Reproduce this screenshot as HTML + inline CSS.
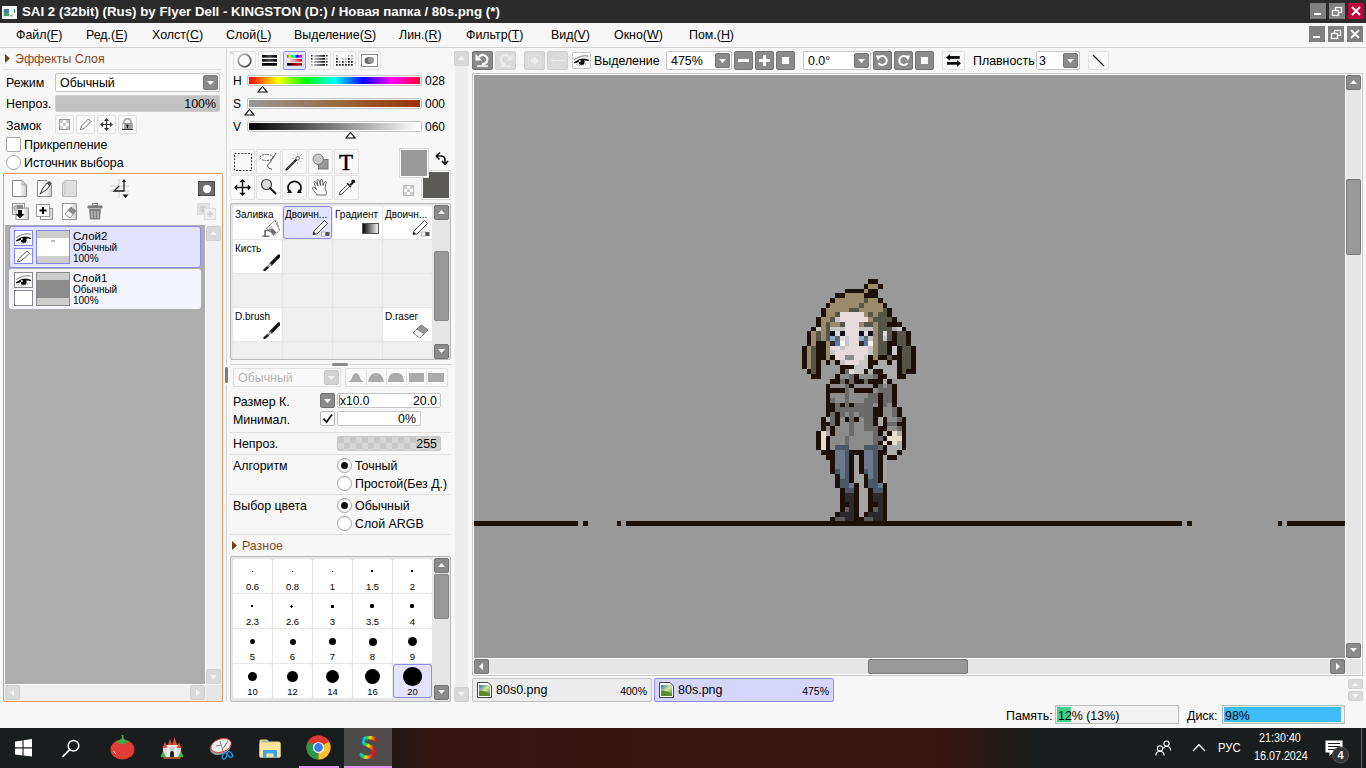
<!DOCTYPE html>
<html><head><meta charset="utf-8">
<style>
*{box-sizing:border-box;margin:0;padding:0}
html,body{width:1366px;height:768px;overflow:hidden;background:#f7f7f7;font-family:"Liberation Sans",sans-serif;font-size:12.4px;color:#000}
.a{position:absolute}
.t{position:absolute;white-space:nowrap;line-height:14px}
.bd{position:absolute;background:#8b8b8b;border:1px solid #737373;border-radius:2px}
.bl{position:absolute;background:#dadada;border:1px solid #d0d0d0;border-radius:2px}
.bw{position:absolute;background:#f9f9f9;border:1px solid #e2e2e2;border-radius:2px}
.inp{position:absolute;background:#fff;border:1px solid #c6c6c6;border-radius:2px}
u{text-decoration:none;border-bottom:1px solid #000}
</style></head><body>
<!-- TITLE BAR -->
<div class="a" style="left:0;top:0;width:1366px;height:23px;background:#2b2b2b"></div>
<div class="t" style="left:22px;top:4px;font-size:13.3px;font-weight:bold;color:#fff;line-height:15px">SAI 2 (32bit) (Rus) by Flyer Dell - KINGSTON (D:) / Новая папка / 80s.png (*)</div>
<!-- MENU BAR -->
<svg class="a" style="left:2px;top:6px" width="15" height="13"><rect x="0" y="0" width="15" height="13" fill="#f4f4f4"/><defs><linearGradient id="ig" x1="0" y1="0" x2="0" y2="1"><stop offset="0" stop-color="#3a70b0"/><stop offset="1" stop-color="#40b050"/></linearGradient></defs><rect x="1.8" y="3" width="5.2" height="7.2" fill="url(#ig)"/><rect x="11.9" y="2.9" width="1.1" height="4" fill="#3a8a70"/><rect x="8" y="9" width="2.8" height="1.5" fill="#bbb"/></svg>
<div class="a" style="left:1310px;top:3px;width:16px;height:16px;background:#808080"></div>
<div class="a" style="left:1314px;top:13px;width:7px;height:2px;background:#fff"></div>
<div class="a" style="left:1329px;top:3px;width:16px;height:16px;background:#808080"></div>
<svg class="a" style="left:1329px;top:3px" width="16" height="16"><rect x="6.5" y="4.5" width="6" height="5" fill="none" stroke="#fff" stroke-width="1.3"/><rect x="3.5" y="7.5" width="6" height="5" fill="#808080" stroke="#fff" stroke-width="1.3"/></svg>
<div class="a" style="left:1348px;top:3px;width:16px;height:16px;background:#c4003a"></div>
<svg class="a" style="left:1348px;top:3px" width="16" height="16"><path d="M4 4 L12 12 M12 4 L4 12" stroke="#fff" stroke-width="2"/></svg>
<div class="t" style="left:16px;top:28px">Файл(<span style="text-decoration:underline;text-underline-offset:2px">F</span>)</div>
<div class="t" style="left:86px;top:28px">Ред.(<span style="text-decoration:underline;text-underline-offset:2px">E</span>)</div>
<div class="t" style="left:152px;top:28px">Холст(<span style="text-decoration:underline;text-underline-offset:2px">C</span>)</div>
<div class="t" style="left:226px;top:28px">Слой(<span style="text-decoration:underline;text-underline-offset:2px">L</span>)</div>
<div class="t" style="left:294px;top:28px">Выделение(<span style="text-decoration:underline;text-underline-offset:2px">S</span>)</div>
<div class="t" style="left:399px;top:28px">Лин.(<span style="text-decoration:underline;text-underline-offset:2px">R</span>)</div>
<div class="t" style="left:466px;top:28px">Фильтр(<span style="text-decoration:underline;text-underline-offset:2px">T</span>)</div>
<div class="t" style="left:551px;top:28px">Вид(<span style="text-decoration:underline;text-underline-offset:2px">V</span>)</div>
<div class="t" style="left:614px;top:28px">Окно(<span style="text-decoration:underline;text-underline-offset:2px">W</span>)</div>
<div class="t" style="left:689px;top:28px">Пом.(<span style="text-decoration:underline;text-underline-offset:2px">H</span>)</div>
<div class="a" style="left:1309px;top:26px;width:16px;height:16px;background:#7f7f7f"></div>
<div class="a" style="left:1313px;top:36px;width:7px;height:2px;background:#fff"></div>
<div class="a" style="left:1328px;top:26px;width:16px;height:16px;background:#7f7f7f"></div>
<svg class="a" style="left:1328px;top:26px" width="16" height="16"><rect x="6.5" y="4.5" width="6" height="5" fill="none" stroke="#fff" stroke-width="1.3"/><rect x="3.5" y="7.5" width="6" height="5" fill="#7f7f7f" stroke="#fff" stroke-width="1.3"/></svg>
<div class="a" style="left:1347px;top:26px;width:16px;height:16px;background:#7f7f7f"></div>
<svg class="a" style="left:1347px;top:26px" width="16" height="16"><path d="M4 4 L12 12 M12 4 L4 12" stroke="#fff" stroke-width="2"/></svg>

<div class="a" style="left:0;top:47px;width:1366px;height:1px;background:#cfcfcf"></div>
<!-- vertical divider -->
<div class="a" style="left:226px;top:48px;width:1px;height:653px;background:#d4d4d4"></div>

<!-- LEFT PANEL -->
<svg class="a" style="left:5px;top:54px" width="6" height="10"><path d="M0 0 L5 4.5 L0 9 Z" fill="#7a3d10"/></svg>
<div class="t" style="left:15px;top:52px;color:#8b4a1c">Эффекты Слоя</div>
<div class="a" style="left:3px;top:69px;width:219px;height:1px;background:#e3e3e3"></div>
<div class="t" style="left:6px;top:76px">Режим</div>
<div class="inp" style="left:55px;top:73px;width:165px;height:19px"></div>
<div class="t" style="left:60px;top:76px">Обычный</div>
<div class="bd" style="left:203px;top:75px;width:15px;height:15px"></div>
<svg class="a" style="left:206px;top:81px" width="9" height="5"><path d="M1 0 L8 0 L4.5 4 Z" fill="#fff"/></svg>
<div class="t" style="left:6px;top:97px">Непроз.</div>
<div class="a" style="left:55px;top:95px;width:165px;height:17px;border:1px solid #cdcdcd;border-radius:2px;background:#c2c2c2"></div>
<div class="t" style="left:180px;top:97px;width:36px;text-align:right">100%</div>
<div class="t" style="left:6px;top:119px">Замок</div>
<div class="bw" style="left:55px;top:115px;width:19px;height:19px"></div>
<div class="bw" style="left:76px;top:115px;width:19px;height:19px"></div>
<div class="bw" style="left:97px;top:115px;width:19px;height:19px"></div>
<div class="bw" style="left:118px;top:115px;width:19px;height:19px"></div>
<svg class="a" style="left:59px;top:119px" width="11" height="11"><rect x="0.5" y="0.5" width="10" height="10" fill="#fff" stroke="#999"/><rect x="1" y="1" width="3" height="3" fill="#ccc"/><rect x="7" y="1" width="3" height="3" fill="#ccc"/><rect x="4" y="4" width="3" height="3" fill="#ccc"/><rect x="1" y="7" width="3" height="3" fill="#ccc"/><rect x="7" y="7" width="3" height="3" fill="#ccc"/></svg>
<svg class="a" style="left:79px;top:118px" width="13" height="13"><path d="M1.5 11.5 L2.5 8 L9.5 1 L12 3.5 L5 10.5 Z" fill="#fff" stroke="#777" stroke-width="1"/></svg>
<svg class="a" style="left:100px;top:118px" width="13" height="13"><path d="M6.5 2 V11 M2 6.5 H11" stroke="#383838" stroke-width="1.1"/><path d="M6.5 0 L4 3 H9 Z M6.5 13 L4 10 H9 Z M0 6.5 L3 4 V9 Z M13 6.5 L10 4 V9 Z" fill="#383838"/></svg>
<svg class="a" style="left:122px;top:118px" width="11" height="13"><path d="M2 5.5 V4 A3.5 3.5 0 0 1 9 4 V5.5" fill="none" stroke="#aaa" stroke-width="1.8"/><rect x="0.2" y="5" width="10.6" height="7" fill="#9c9c9c"/><rect x="0.2" y="11" width="10.6" height="1" fill="#333"/><rect x="0.6" y="5.8" width="1.4" height="5" fill="#fff"/><circle cx="5.5" cy="7.6" r="1" fill="#000"/><rect x="5" y="7.6" width="1" height="2.6" fill="#000"/></svg>
<div class="a" style="left:6px;top:137px;width:15px;height:15px;border:1px solid #a8a8a8;border-radius:2px;background:#fff"></div>
<div class="t" style="left:24px;top:138px">Прикрепление</div>
<div class="a" style="left:6px;top:155px;width:15px;height:15px;border:1px solid #a8a8a8;border-radius:50%;background:#fff"></div>
<div class="t" style="left:24px;top:156px">Источник выбора</div>
<div class="a" style="left:3px;top:173px;width:220px;height:529px;border:1px solid #e59a68;border-radius:2px"></div>

<svg class="a" style="left:12px;top:180px" width="16" height="18"><defs><linearGradient id="pg" x1="0" x2="1"><stop offset="0.5" stop-color="#fff"/><stop offset="1" stop-color="#c8c8c8"/></linearGradient></defs><path d="M0.5 0.5 H10 L14.5 5 V16.5 H0.5 Z" fill="url(#pg)" stroke="#8a8a8a"/><path d="M10 0.5 V5 H14.5" fill="none" stroke="#aaa"/></svg>
<svg class="a" style="left:37px;top:180px" width="16" height="18"><path d="M0.5 0.5 H10 L14.5 5 V16.5 H0.5 Z" fill="url(#pg)" stroke="#8a8a8a"/><path d="M3 14 L6 8 L10 3 L13 5.5 L9 10 Z" fill="#fff" stroke="#333" stroke-width="1"/><path d="M10 3 L12.5 1 L15 3.5 L13 5.5 Z" fill="#555"/></svg>
<svg class="a" style="left:62px;top:180px" width="16" height="18"><path d="M0.5 3 L3 0.5 H14.5 V16.5 H0.5 Z" fill="#dedede" stroke="#b8b8b8"/><path d="M3 0.5 V13 L0.5 16" fill="none" stroke="#c4c4c4"/></svg>
<svg class="a" style="left:110px;top:179px" width="20" height="20"><path d="M0 7 H19 M0 12 H19 M9 0 V19" stroke="#ccc" stroke-width="1"/><path d="M14 1 V12 H4 L9 7" fill="none" stroke="#222" stroke-width="1.3"/><path d="M14 0 L12 3 H16 Z" fill="#222"/><path d="M12.5 15.5 H18.5 L15.5 19 Z" fill="#111"/></svg>
<div class="a" style="left:198px;top:181px;width:17px;height:15px;background:#6c6c6c;border:1px solid #4a4a4a"></div>
<div class="a" style="left:202.5px;top:184.5px;width:8px;height:8px;border-radius:50%;background:#fff"></div>
<svg class="a" style="left:12px;top:203px" width="17" height="17"><rect x="0.5" y="0.5" width="12" height="11" fill="#eee" stroke="#999"/><rect x="4" y="5" width="12.5" height="11.5" fill="url(#pg)" stroke="#999"/><circle cx="4" cy="5" r="3" fill="#bbb"/><rect x="5" y="2" width="6" height="4" fill="#888"/><path d="M6 7 H10 V11 H12.5 L8 15.5 L3.5 11 H6 Z" fill="#111"/></svg>
<svg class="a" style="left:36px;top:204px" width="18" height="16"><rect x="4.5" y="4.5" width="12" height="11" fill="url(#pg)" stroke="#999"/><rect x="0.5" y="0.5" width="13" height="12" fill="#fff" stroke="#333" stroke-dasharray="1 1"/><path d="M6 3 H8 V5.5 H10.5 V7.5 H8 V10 H6 V7.5 H3.5 V5.5 H6 Z" fill="#000"/></svg>
<svg class="a" style="left:62px;top:203px" width="16" height="17"><path d="M0.5 0.5 H14.5 V16.5 H0.5 Z" fill="url(#pg)" stroke="#999"/><path d="M3 11 L9 4 L14 8 L8 15 Z" fill="#fff" stroke="#888"/><path d="M6 7.5 L9 4 L14 8 L11 11.5 Z" fill="#888"/></svg>
<svg class="a" style="left:87px;top:203px" width="16" height="17"><rect x="5.5" y="0.5" width="5" height="2" fill="none" stroke="#888"/><rect x="0.5" y="2.5" width="15" height="3" rx="1" fill="#7a7a7a"/><path d="M2 6 H14 L13 16.5 H3 Z" fill="#808080"/><path d="M5 8 V15 M8 8 V15 M11 8 V15" stroke="#c8c8c8" stroke-width="1.2"/></svg>
<svg class="a" style="left:197px;top:203px" width="20" height="17"><rect x="0.5" y="0.5" width="12" height="11" fill="#e4e4e4" stroke="#ddd"/><circle cx="6" cy="6" r="3.5" fill="#d0d0d0"/><rect x="7.5" y="5.5" width="11" height="11" fill="#eee" stroke="#ddd"/><path d="M13 8 V14 M10 11 H16" stroke="#ccc" stroke-width="1.6"/></svg>


<div class="a" style="left:5px;top:225px;width:217px;height:476px;background:#fff"></div>
<div class="a" style="left:5px;top:225px;width:200px;height:459px;background:#adadad"></div>
<div class="a" style="left:206px;top:225px;width:16px;height:459px;background:#f0f0f0"></div>
<div class="a" style="left:5px;top:685px;width:201px;height:16px;background:#f0f0f0"></div>
<div class="a" style="left:206px;top:685px;width:16px;height:16px;background:#e6e6e6"></div>
<div class="bl" style="left:206px;top:226px;width:15px;height:15px"></div>
<svg class="a" style="left:209px;top:231px" width="9" height="5"><path d="M1 4 L8 4 L4.5 0 Z" fill="#f4f4f4"/></svg>
<div class="bl" style="left:206px;top:669px;width:15px;height:15px"></div>
<svg class="a" style="left:209px;top:675px" width="9" height="5"><path d="M1 0 L8 0 L4.5 4 Z" fill="#f4f4f4"/></svg>
<div class="bl" style="left:5px;top:685px;width:15px;height:15px"></div>
<svg class="a" style="left:10px;top:688px" width="5" height="9"><path d="M4 1 L4 8 L0 4.5 Z" fill="#f4f4f4"/></svg>
<div class="bl" style="left:190px;top:685px;width:15px;height:15px"></div>
<svg class="a" style="left:196px;top:688px" width="5" height="9"><path d="M0 1 L0 8 L4 4.5 Z" fill="#f4f4f4"/></svg>
<div class="a" style="left:9px;top:226px;width:192px;height:42px;background:#e3e3fd;border:1px solid #8c8cf4;border-radius:3px"></div>
<div class="a" style="left:14px;top:230px;width:19px;height:16px;background:#fff;border:1px solid #8686f2"></div>
<div class="a" style="left:14px;top:248px;width:19px;height:16px;background:#fff;border:1px solid #8686f2"></div>
<svg class="a" style="left:15px;top:232px" width="17" height="13"><path d="M1.2 5.6 Q8.7 0.5 15.5 2.2" fill="none" stroke="#666" stroke-width="0.9"/><path d="M1.2 8.8 Q9 2.6 15.8 6.4 Q9 4.6 4 8.2 Z" fill="#000" stroke="#000" stroke-width="0.9"/><circle cx="8.7" cy="7.9" r="2.9" fill="#000"/><circle cx="6.9" cy="6.9" r="1" fill="#fff"/><path d="M3.5 10.6 Q9 12.4 14.5 9" fill="none" stroke="#555" stroke-width="0.9" stroke-dasharray="1 1.2"/></svg>
<svg class="a" style="left:16px;top:250px" width="15" height="13"><path d="M1.5 12 L2.5 9 L11 1 L13.5 3.5 L5 11 Z" fill="#fff" stroke="#555" stroke-width="0.9"/></svg>
<div class="a" style="left:36px;top:230px;width:34px;height:34px;background:#fff;border:1px solid #8686f2"></div>
<div class="a" style="left:37px;top:231px;width:32px;height:7px;background:#cdcdcd"></div>
<div class="a" style="left:37px;top:256px;width:32px;height:7px;background:#cdcdcd"></div>
<div class="a" style="left:51px;top:240px;width:4px;height:2px;background:#bbb"></div>
<div class="t" style="left:73px;top:229px;font-size:11.5px">Слой2</div>
<div class="t" style="left:73px;top:242px;font-size:10px;line-height:12px">Обычный</div>
<div class="t" style="left:73px;top:253px;font-size:10px;line-height:12px">100%</div>
<div class="a" style="left:9px;top:269px;width:192px;height:40px;background:#f4f4fd;border-radius:3px"></div>
<div class="a" style="left:14px;top:272px;width:19px;height:16px;background:#fff;border:1px solid #8a8a8a"></div>
<div class="a" style="left:14px;top:290px;width:19px;height:16px;background:#fff;border:1px solid #8a8a8a"></div>
<svg class="a" style="left:15px;top:274px" width="17" height="13"><path d="M1.2 5.6 Q8.7 0.5 15.5 2.2" fill="none" stroke="#666" stroke-width="0.9"/><path d="M1.2 8.8 Q9 2.6 15.8 6.4 Q9 4.6 4 8.2 Z" fill="#000" stroke="#000" stroke-width="0.9"/><circle cx="8.7" cy="7.9" r="2.9" fill="#000"/><circle cx="6.9" cy="6.9" r="1" fill="#fff"/><path d="M3.5 10.6 Q9 12.4 14.5 9" fill="none" stroke="#555" stroke-width="0.9" stroke-dasharray="1 1.2"/></svg>
<div class="a" style="left:36px;top:272px;width:34px;height:34px;background:#cdcdcd;border:1px solid #8a8a8a"></div>
<div class="a" style="left:37px;top:280px;width:32px;height:18px;background:#8c8c8c"></div>
<div class="t" style="left:73px;top:271px;font-size:11.5px">Слой1</div>
<div class="t" style="left:73px;top:284px;font-size:10px;line-height:12px">Обычный</div>
<div class="t" style="left:73px;top:295px;font-size:10px;line-height:12px">100%</div>


<div class="a" style="left:224px;top:365px;width:5px;height:20px;background:#f7f7f7"></div>
<div class="a" style="left:225px;top:367px;width:3px;height:16px;background:#7a7a7a;border-radius:2px"></div>
<!-- MIDDLE PANEL: color -->
<div class="a" style="left:230px;top:51px;width:3px;height:3px;background:#dcdcdc"></div>
<div class="bw" style="left:233px;top:51px;width:23px;height:19px"></div>
<div class="bw" style="left:258px;top:51px;width:23px;height:19px"></div>
<div class="a" style="left:283px;top:51px;width:23px;height:19px;background:#e2e2fc;border:1px solid #8c8cf2;border-radius:2px"></div>
<div class="bw" style="left:308px;top:51px;width:23px;height:19px"></div>
<div class="bw" style="left:333px;top:51px;width:23px;height:19px"></div>
<div class="bw" style="left:358px;top:51px;width:23px;height:19px"></div>
<svg class="a" style="left:236px;top:52px" width="17" height="17"><defs><linearGradient id="rg" x1="0" y1="0" x2="1" y2="1"><stop offset="0" stop-color="#ccc"/><stop offset="1" stop-color="#333"/></linearGradient></defs><circle cx="8.5" cy="8.5" r="6.3" fill="none" stroke="url(#rg)" stroke-width="1.8"/></svg>
<svg class="a" style="left:262px;top:55px" width="15" height="11"><defs><linearGradient id="bg1" x1="0" x2="1"><stop offset="0" stop-color="#000"/><stop offset="0.5" stop-color="#444"/><stop offset="1" stop-color="#000"/></linearGradient></defs><rect x="0" y="0" width="15" height="2.7" fill="url(#bg1)"/><rect x="0" y="4" width="15" height="2.7" fill="url(#bg1)"/><rect x="0" y="8" width="15" height="2.7" fill="#000"/></svg>
<svg class="a" style="left:287px;top:55px" width="15" height="11"><defs><linearGradient id="rb" x1="0" x2="1"><stop offset="0" stop-color="#f00"/><stop offset="0.17" stop-color="#ff0"/><stop offset="0.33" stop-color="#0f0"/><stop offset="0.5" stop-color="#0ff"/><stop offset="0.67" stop-color="#00f"/><stop offset="0.83" stop-color="#f0f"/><stop offset="1" stop-color="#f00"/></linearGradient><linearGradient id="wr" x1="0" x2="1"><stop offset="0" stop-color="#fff"/><stop offset="1" stop-color="#f00"/></linearGradient><linearGradient id="kr" x1="0" x2="1"><stop offset="0" stop-color="#000"/><stop offset="1" stop-color="#f00"/></linearGradient></defs><rect x="0" y="0" width="15" height="2.7" fill="url(#rb)"/><rect x="0" y="4" width="15" height="2.7" fill="url(#wr)"/><rect x="0" y="8" width="15" height="2.7" fill="url(#kr)"/></svg>
<svg class="a" style="left:311px;top:55px" width="17" height="11"><defs><linearGradient id="gl" x1="0" x2="1"><stop offset="0" stop-color="#bbb"/><stop offset="1" stop-color="#111"/></linearGradient></defs><g fill="#333"><rect x="0" y="0" width="1.6" height="1.6"/><rect x="0" y="3" width="1.6" height="1.6"/><rect x="0" y="6" width="1.6" height="1.6" fill="#999"/><rect x="0" y="9" width="1.6" height="1.6" fill="#aaa"/><rect x="15" y="0" width="1.6" height="1.6"/><rect x="15" y="3" width="1.6" height="1.6" fill="#888"/><rect x="15" y="6" width="1.6" height="1.6"/><rect x="15" y="9" width="1.6" height="1.6"/></g><rect x="3" y="0" width="11" height="1.8" fill="url(#gl)"/><rect x="3" y="3" width="11" height="1.8" fill="url(#gl)"/><rect x="3" y="6" width="11" height="1.8" fill="url(#gl)"/><rect x="3" y="9" width="11" height="1.8" fill="url(#gl)"/></svg>
<svg class="a" style="left:336px;top:55px" width="17" height="11"><g fill="#111"><rect x="0" y="3" width="1.7" height="1.7"/><rect x="0" y="6" width="1.7" height="1.7"/><rect x="0" y="9" width="1.7" height="1.7"/><rect x="3" y="9" width="1.7" height="1.7"/><rect x="6" y="6" width="1.7" height="1.7"/><rect x="6" y="9" width="1.7" height="1.7"/><rect x="9" y="9" width="1.7" height="1.7"/><rect x="12" y="3" width="1.7" height="1.7"/><rect x="12" y="6" width="1.7" height="1.7"/><rect x="12" y="9" width="1.7" height="1.7"/><rect x="15" y="6" width="1.7" height="1.7"/><rect x="15" y="9" width="1.7" height="1.7"/></g><g fill="#aaa"><rect x="0" y="0" width="1.7" height="1.7"/><rect x="6" y="3" width="1.7" height="1.7"/><rect x="9" y="6" width="1.7" height="1.7"/><rect x="12" y="0" width="1.7" height="1.7"/><rect x="15" y="0" width="1.7" height="1.7"/><rect x="3" y="6" width="1.7" height="1.7"/><rect x="9" y="3" width="1.7" height="1.7"/><rect x="15" y="3" width="1.7" height="1.7"/></g></svg>
<svg class="a" style="left:361px;top:54px" width="17" height="13"><rect x="0.5" y="0.5" width="16" height="12" fill="#fff" stroke="#888"/><ellipse cx="8" cy="6.5" rx="4.5" ry="3.5" fill="#666"/><ellipse cx="10" cy="6" rx="3" ry="3" fill="#999"/></svg>
<div class="t" style="left:233px;top:74px;font-size:12px">H</div>
<div class="t" style="left:233px;top:97px;font-size:12px">S</div>
<div class="t" style="left:233px;top:120px;font-size:12px">V</div>
<div class="a" style="left:247px;top:75px;width:175px;height:11px;border:1px solid #c4c4c4;border-radius:2px;background:#fff"></div>
<div class="a" style="left:249px;top:77px;width:171px;height:7px;background:linear-gradient(90deg,#f00 0%,#ff0 16.7%,#0f0 33.3%,#0ff 50%,#00f 66.7%,#f0f 83.3%,#f03 100%)"></div>
<div class="a" style="left:247px;top:98px;width:175px;height:11px;border:1px solid #c4c4c4;border-radius:2px;background:#fff"></div>
<div class="a" style="left:249px;top:100px;width:171px;height:7px;background:linear-gradient(90deg,#999 0%,#9a6a40 50%,#993300 100%)"></div>
<div class="a" style="left:247px;top:121px;width:175px;height:11px;border:1px solid #c4c4c4;border-radius:2px;background:#fff"></div>
<div class="a" style="left:249px;top:123px;width:171px;height:7px;background:linear-gradient(90deg,#000 0%,#fff 100%)"></div>
<svg class="a" style="left:257px;top:86px" width="11" height="7"><path d="M5.5 0.5 L10 6 L1 6 Z" fill="#fff" stroke="#000" stroke-width="1.1"/></svg>
<svg class="a" style="left:244px;top:109px" width="11" height="7"><path d="M5.5 0.5 L10 6 L1 6 Z" fill="#fff" stroke="#000" stroke-width="1.1"/></svg>
<svg class="a" style="left:345px;top:132px" width="11" height="7"><path d="M5.5 0.5 L10 6 L1 6 Z" fill="#fff" stroke="#000" stroke-width="1.1"/></svg>
<div class="t" style="left:425px;top:74px;font-size:12px">028</div>
<div class="t" style="left:425px;top:97px;font-size:12px">000</div>
<div class="t" style="left:425px;top:120px;font-size:12px">060</div>
<div class="bw" style="left:230px;top:149px;width:25px;height:25px"></div>
<div class="bw" style="left:256px;top:149px;width:25px;height:25px"></div>
<div class="bw" style="left:282px;top:149px;width:25px;height:25px"></div>
<div class="bw" style="left:308px;top:149px;width:25px;height:25px"></div>
<div class="bw" style="left:334px;top:149px;width:25px;height:25px"></div>
<div class="bw" style="left:230px;top:175px;width:25px;height:25px"></div>
<div class="bw" style="left:256px;top:175px;width:25px;height:25px"></div>
<div class="bw" style="left:282px;top:175px;width:25px;height:25px"></div>
<div class="bw" style="left:308px;top:175px;width:25px;height:25px"></div>
<div class="bw" style="left:334px;top:175px;width:25px;height:25px"></div>

<svg class="a" style="left:234px;top:153px" width="18" height="18"><rect x="0.5" y="0.5" width="17" height="17" fill="none" stroke="#333" stroke-width="1" stroke-dasharray="2 1.4"/></svg>
<svg class="a" style="left:258px;top:152px" width="22" height="20"><ellipse cx="8.5" cy="5.5" rx="6.5" ry="3" fill="none" stroke="#333" stroke-width="0.9" stroke-dasharray="1.6 1"/><path d="M18 1 C16 5 14 6 13 9 C12 12 8 12 10 15 C11 17 13 17 14 17" fill="none" stroke="#333" stroke-width="0.9"/></svg>
<svg class="a" style="left:284px;top:152px" width="21" height="20"><path d="M2.5 17.5 L12 8" stroke="#222" stroke-width="2.4" stroke-linecap="round"/><path d="M3 17 L11.5 8.5" stroke="#777" stroke-width="0.8"/><circle cx="13.7" cy="6.3" r="1.8" fill="#fff" stroke="#444" stroke-width="0.8"/><path d="M13.7 0.5 V2.8 M13.7 9.8 V12 M8 6.3 H10.3 M17.2 6.3 H19.5 M9.8 2.4 L11.3 3.9 M16.1 8.7 L17.6 10.2 M17.6 2.4 L16.1 3.9" stroke="#999" stroke-width="0.8"/></svg>
<svg class="a" style="left:312px;top:153px" width="18" height="18"><rect x="6.5" y="6.5" width="9.5" height="9.5" fill="#9a9a9a" stroke="#666" stroke-width="0.8"/><circle cx="6.2" cy="6.2" r="5.2" fill="#c8c8c8" stroke="#666" stroke-width="0.8"/></svg>
<div class="t" style="left:339px;top:151px;font-family:'Liberation Serif',serif;font-size:23px;line-height:24px;font-weight:normal;-webkit-text-stroke:0.4px #000">T</div>
<svg class="a" style="left:234px;top:179px" width="17" height="17"><path d="M8.5 2 V15 M2 8.5 H15" stroke="#111" stroke-width="1.4"/><path d="M8.5 0 L5.5 3.2 H11.5 Z M8.5 17 L5.5 13.8 H11.5 Z M0 8.5 L3.2 5.5 V11.5 Z M17 8.5 L13.8 5.5 V11.5 Z" fill="#111"/></svg>
<svg class="a" style="left:260px;top:178px" width="18" height="18"><circle cx="6.5" cy="6.5" r="5" fill="#ddd" stroke="#333" stroke-width="1.1"/><path d="M10 10 L15.5 15.5" stroke="#111" stroke-width="2" stroke-linecap="round"/></svg>
<svg class="a" style="left:286px;top:178px" width="17" height="18"><path d="M3.5 14 A6.5 6.5 0 1 1 13.5 14" fill="none" stroke="#111" stroke-width="1.8"/><path d="M1 15 L6 15 L4 11 Z M16 15 L11 15 L13 11 Z" fill="#111"/></svg>
<svg class="a" style="left:312px;top:179px" width="18" height="18"><path d="M5 16 C3 13 1 11 0.5 9 C0.5 8 2 8 3 9 L4.5 10.5 L2 4 C1.5 2.5 3 2 3.7 3 L6 7 L5 1.5 C5 0.5 6.5 0.3 7 1.5 L8.5 6.5 L8.7 1 C8.8 0 10.3 0 10.5 1.2 L11 6.5 L12.5 3 C13 2 14.5 2.5 14.2 3.5 L13 9 C14 12 15 14 14 16 Z" fill="#fff" stroke="#444" stroke-width="0.8"/></svg>
<svg class="a" style="left:338px;top:179px" width="18" height="17"><path d="M1 15.5 L2 13 L10 5 L12 7 L4 15 Z" fill="#fff" stroke="#333" stroke-width="0.8"/><path d="M9 4 L13 8" stroke="#111" stroke-width="1.5"/><path d="M11.5 5.5 L14.5 2.5 C15.5 1.5 17 2 16.5 3.2 L13.5 6.5 Z" fill="#111"/><circle cx="15.2" cy="2.2" r="1.8" fill="#111"/></svg>
<div class="a" style="left:421px;top:170px;width:30px;height:30px;background:#5b5a56;border:1px solid #d8d8d8;box-shadow:inset 0 0 0 1px #fff"></div>
<div class="a" style="left:399px;top:148px;width:30px;height:30px;background:#9a9a9a;border:1px solid #d8d8d8;box-shadow:inset 0 0 0 1px #fff"></div>
<svg class="a" style="left:434px;top:151px" width="15" height="14"><path d="M2 5 L6 1.5 M2 5 L5.5 8.5 M2 5 H7 C10 5 11 7 11 9 V12" fill="none" stroke="#111" stroke-width="1.6"/><path d="M8 10 L11 13.5 L14 10" fill="none" stroke="#111" stroke-width="1.6"/></svg>
<svg class="a" style="left:403px;top:185px" width="11" height="11"><rect x="0.5" y="0.5" width="10" height="10" fill="#fff" stroke="#bbb"/><rect x="1" y="1" width="3" height="3" fill="#ccc"/><rect x="7" y="1" width="3" height="3" fill="#ccc"/><rect x="4" y="4" width="3" height="3" fill="#ccc"/><rect x="1" y="7" width="3" height="3" fill="#ccc"/><rect x="7" y="7" width="3" height="3" fill="#ccc"/></svg>
<div class="a" style="left:230px;top:203px;width:221px;height:157px;border:1px solid #b9b9b9;border-radius:2px;background:#e6e6e6;overflow:hidden">
<div class="a" style="left:2px;top:2px;width:49px;height:33px;background:#fff;border-radius:2px"></div>
<div class="t" style="left:4px;top:5px;font-size:10px;line-height:12px">Заливка</div>
<div class="a" style="left:52px;top:2px;width:49px;height:33px;background:#e3e3fd;border:1px solid #8c8cf4;border-radius:3px"></div>
<div class="t" style="left:54px;top:5px;font-size:10px;line-height:12px">Двоичн...</div>
<div class="a" style="left:102px;top:2px;width:49px;height:33px;background:#fff;border-radius:2px"></div>
<div class="t" style="left:104px;top:5px;font-size:10px;line-height:12px">Градиент</div>
<div class="a" style="left:152px;top:2px;width:49px;height:33px;background:#fff;border-radius:2px"></div>
<div class="t" style="left:154px;top:5px;font-size:10px;line-height:12px">Двоичн...</div>
<div class="a" style="left:2px;top:36px;width:49px;height:33px;background:#fff;border-radius:2px"></div>
<div class="t" style="left:4px;top:39px;font-size:10px;line-height:12px">Кисть</div>
<div class="a" style="left:52px;top:36px;width:49px;height:33px;background:#efefef;border-radius:2px"></div>
<div class="a" style="left:102px;top:36px;width:49px;height:33px;background:#efefef;border-radius:2px"></div>
<div class="a" style="left:152px;top:36px;width:49px;height:33px;background:#efefef;border-radius:2px"></div>
<div class="a" style="left:2px;top:70px;width:49px;height:33px;background:#efefef;border-radius:2px"></div>
<div class="a" style="left:52px;top:70px;width:49px;height:33px;background:#efefef;border-radius:2px"></div>
<div class="a" style="left:102px;top:70px;width:49px;height:33px;background:#efefef;border-radius:2px"></div>
<div class="a" style="left:152px;top:70px;width:49px;height:33px;background:#efefef;border-radius:2px"></div>
<div class="a" style="left:2px;top:104px;width:49px;height:33px;background:#fff;border-radius:2px"></div>
<div class="t" style="left:4px;top:107px;font-size:10px;line-height:12px">D.brush</div>
<div class="a" style="left:52px;top:104px;width:49px;height:33px;background:#efefef;border-radius:2px"></div>
<div class="a" style="left:102px;top:104px;width:49px;height:33px;background:#efefef;border-radius:2px"></div>
<div class="a" style="left:152px;top:104px;width:49px;height:33px;background:#fff;border-radius:2px"></div>
<div class="t" style="left:154px;top:107px;font-size:10px;line-height:12px">D.raser</div>
<div class="a" style="left:2px;top:138px;width:49px;height:30px;background:#efefef;border-radius:2px"></div>
<div class="a" style="left:52px;top:138px;width:49px;height:30px;background:#efefef;border-radius:2px"></div>
<div class="a" style="left:102px;top:138px;width:49px;height:30px;background:#efefef;border-radius:2px"></div>
<div class="a" style="left:152px;top:138px;width:49px;height:30px;background:#efefef;border-radius:2px"></div>
</div>

<svg class="a" style="left:260px;top:217px" width="22" height="22"><path d="M6.6 11.5 L14.9 3.2 L19.8 13.2 L13.8 18.6 Z" fill="#fff" stroke="#444" stroke-width="0.9" stroke-dasharray="1.2 0.6"/><path d="M13.5 4.5 Q15 1.5 17 4.5 L18.8 10" fill="none" stroke="#999" stroke-width="0.9"/><path d="M8.3 12.3 L13.3 12 L16.2 15.2 L13.8 18.2 Z" fill="#6e6e6e"/><path d="M8.6 11.6 L11.5 9 L13.3 12 Z" fill="#c8c8c8"/><path d="M4.2 13 H9.5 V14.2 H6 V19.3 H4.2 Z" fill="#707070"/><rect x="2" y="18.5" width="7.5" height="1.4" rx="0.7" fill="#707070"/></svg>
<svg class="a" style="left:312px;top:219px" width="18" height="18"><path d="M1 15.5 L2 12 L12.5 1.5 L15.5 4.5 L5 15 Z" fill="#fff" stroke="#333" stroke-width="0.9"/><path d="M1 15.5 L1.8 12.8 L3.8 14.8 Z" fill="#111"/><rect x="9.5" y="13" width="4" height="4" fill="#fff" stroke="#888" stroke-width="0.6"/><rect x="13.5" y="13" width="4" height="4" fill="#555"/></svg>
<svg class="a" style="left:362px;top:223px" width="17" height="11"><defs><linearGradient id="gg" x1="0" x2="1"><stop offset="0" stop-color="#000"/><stop offset="1" stop-color="#fff"/></linearGradient></defs><rect x="0.5" y="0.5" width="16" height="10" fill="url(#gg)" stroke="#555"/></svg>
<svg class="a" style="left:412px;top:219px" width="18" height="18"><path d="M1 15.5 L2 12 L12.5 1.5 L15.5 4.5 L5 15 Z" fill="#fff" stroke="#333" stroke-width="0.9"/><path d="M1 15.5 L1.8 12.8 L3.8 14.8 Z" fill="#111"/><rect x="9.5" y="13" width="4" height="4" fill="#fff" stroke="#888" stroke-width="0.6"/><rect x="13.5" y="13" width="4" height="4" fill="#555"/></svg>
<svg class="a" style="left:263px;top:254px" width="17" height="17"><path d="M16 2 L8 10" stroke="#111" stroke-width="3.2" stroke-linecap="round"/><path d="M8 10 L4 14" stroke="#aaa" stroke-width="2.6"/><path d="M4.5 13.5 L1.5 16" stroke="#222" stroke-width="2.4" stroke-linecap="round"/></svg>
<svg class="a" style="left:263px;top:322px" width="17" height="17"><path d="M16 2 L8 10" stroke="#111" stroke-width="3.2" stroke-linecap="round"/><path d="M8 10 L4 14" stroke="#aaa" stroke-width="2.6"/><path d="M4.5 13.5 L1.5 16" stroke="#222" stroke-width="2.4" stroke-linecap="round"/></svg>
<svg class="a" style="left:412px;top:322px" width="18" height="17"><path d="M1 11 L9 3 L16 8 L8 16 Z" fill="#f4f4f4" stroke="#777" stroke-width="0.9"/><path d="M5 7 L9 3 L16 8 L12 12 Z" fill="#999" stroke="#666" stroke-width="0.6"/></svg>
<div class="bd" style="left:434px;top:205px;width:15px;height:15px"></div>
<svg class="a" style="left:437px;top:210px" width="9" height="5"><path d="M1 4 L8 4 L4.5 0 Z" fill="#fff"/></svg>
<div class="a" style="left:434px;top:220px;width:15px;height:124px;background:#e6e6e6"></div>
<div class="a" style="left:434px;top:251px;width:15px;height:70px;background:#989898;border:1px solid #858585;border-radius:2px"></div>
<div class="bd" style="left:434px;top:344px;width:15px;height:15px"></div>
<svg class="a" style="left:437px;top:349px" width="9" height="5"><path d="M1 0 L8 0 L4.5 4 Z" fill="#fff"/></svg>

<div class="a" style="left:230px;top:364px;width:221px;height:1px;background:#d2d2d2"></div>
<div class="a" style="left:332px;top:363px;width:16px;height:3px;background:#8a8a8a;border-radius:2px"></div>
<div class="a" style="left:233px;top:368px;width:108px;height:19px;border:1px solid #e0e0e0;border-radius:2px;background:#f9f9f9"></div>
<div class="t" style="left:238px;top:371px;color:#b4b4b4">Обычный</div>
<div class="a" style="left:324px;top:370px;width:15px;height:15px;background:#d2d2d2;border:1px solid #c8c8c8;border-radius:2px"></div>
<svg class="a" style="left:327px;top:376px" width="9" height="5"><path d="M1 0 L8 0 L4.5 4 Z" fill="#f4f4f4"/></svg>
<div class="a" style="left:345px;top:368px;width:103px;height:19px;border:1px solid #e0e0e0;border-radius:2px;background:#f9f9f9"></div>
<svg class="a" style="left:346px;top:369px" width="101" height="17"><g stroke="#e4e4e4"><path d="M20.5 1 V16 M40.5 1 V16 M60.5 1 V16 M80.5 1 V16"/></g><g fill="#aaa"><path d="M2 13 C6 13 6 4 10 4 C14 4 14 13 18 13 Z"/><path d="M22 13 C23 7 26 4 30 4 C34 4 37 7 38 13 Z"/><path d="M42 13 C43 6 44 4 50 4 C56 4 57 6 58 13 Z"/><rect x="63" y="4" width="15" height="9"/><rect x="82" y="4" width="16" height="9"/></g></svg>
<div class="t" style="left:233px;top:395px">Размер К.</div>
<div class="bd" style="left:320px;top:393px;width:15px;height:15px"></div>
<svg class="a" style="left:323px;top:399px" width="9" height="5"><path d="M1 0 L8 0 L4.5 4 Z" fill="#fff"/></svg>
<div class="inp" style="left:337px;top:393px;width:104px;height:15px"></div>
<div class="a" style="left:339px;top:395px;width:1px;height:11px;background:#888"></div>
<div class="t" style="left:340px;top:395px;line-height:13px;font-size:12px">x10.0</div>
<div class="t" style="left:400px;top:395px;width:37px;text-align:right;line-height:13px">20.0</div>
<div class="t" style="left:233px;top:413px">Минимал.</div>
<div class="inp" style="left:320px;top:411px;width:15px;height:15px;border-color:#b8b8b8"></div>
<svg class="a" style="left:322px;top:413px" width="11" height="11"><path d="M1.5 5.5 L4.5 9 L10 1.5" fill="none" stroke="#111" stroke-width="1.8"/></svg>
<div class="inp" style="left:337px;top:411px;width:84px;height:15px"></div>
<div class="t" style="left:380px;top:413px;width:36px;text-align:right;line-height:13px">0%</div>
<div class="a" style="left:230px;top:432px;width:221px;height:1px;background:#e2e2e2"></div>
<div class="t" style="left:233px;top:437px">Непроз.</div>
<div class="a" style="left:337px;top:436px;width:104px;height:15px;border:1px solid #c8c8c8;border-radius:2px;background-color:#c8c8c8;background-image:linear-gradient(45deg,#d6d6d6 25%,transparent 25%,transparent 75%,#d6d6d6 75%),linear-gradient(45deg,#d6d6d6 25%,transparent 25%,transparent 75%,#d6d6d6 75%);background-size:12px 12px;background-position:0 0,6px 6px"></div>
<div class="t" style="left:400px;top:438px;width:37px;text-align:right;line-height:13px">255</div>
<div class="a" style="left:230px;top:454px;width:221px;height:1px;background:#e2e2e2"></div>
<div class="t" style="left:233px;top:459px">Алгоритм</div>
<div class="a" style="left:337px;top:458px;width:15px;height:15px;border:1px solid #a0a0a0;border-radius:50%;background:#fff"></div>
<div class="a" style="left:341px;top:462px;width:7px;height:7px;border-radius:50%;background:#111"></div>
<div class="t" style="left:355px;top:459px">Точный</div>
<div class="a" style="left:337px;top:476px;width:15px;height:15px;border:1px solid #a0a0a0;border-radius:50%;background:#fff"></div>
<div class="t" style="left:355px;top:477px">Простой(Без Д.)</div>
<div class="a" style="left:230px;top:494px;width:221px;height:1px;background:#e2e2e2"></div>
<div class="t" style="left:233px;top:499px">Выбор цвета</div>
<div class="a" style="left:337px;top:498px;width:15px;height:15px;border:1px solid #a0a0a0;border-radius:50%;background:#fff"></div>
<div class="a" style="left:341px;top:502px;width:7px;height:7px;border-radius:50%;background:#111"></div>
<div class="t" style="left:355px;top:499px">Обычный</div>
<div class="a" style="left:337px;top:516px;width:15px;height:15px;border:1px solid #a0a0a0;border-radius:50%;background:#fff"></div>
<div class="t" style="left:355px;top:517px">Слой ARGB</div>
<div class="a" style="left:230px;top:534px;width:221px;height:1px;background:#e2e2e2"></div>
<svg class="a" style="left:232px;top:541px" width="6" height="10"><path d="M0 0 L5 4.5 L0 9 Z" fill="#7a3d10"/></svg>
<div class="t" style="left:242px;top:539px;color:#8b4a1c">Разное</div>
<div class="a" style="left:230px;top:556px;width:221px;height:146px;border:1px solid #b9b9b9;border-radius:2px;background:#e6e6e6;overflow:hidden">
<div class="a" style="left:2px;top:2px;width:39px;height:34px;background:#fff;border-radius:2px"></div>
<div class="t" style="left:2px;top:24px;width:39px;text-align:center;font-size:9.5px;line-height:11px">0.6</div>
<div class="a" style="left:42px;top:2px;width:39px;height:34px;background:#fff;border-radius:2px"></div>
<div class="t" style="left:42px;top:24px;width:39px;text-align:center;font-size:9.5px;line-height:11px">0.8</div>
<div class="a" style="left:82px;top:2px;width:39px;height:34px;background:#fff;border-radius:2px"></div>
<div class="t" style="left:82px;top:24px;width:39px;text-align:center;font-size:9.5px;line-height:11px">1</div>
<div class="a" style="left:122px;top:2px;width:39px;height:34px;background:#fff;border-radius:2px"></div>
<div class="t" style="left:122px;top:24px;width:39px;text-align:center;font-size:9.5px;line-height:11px">1.5</div>
<div class="a" style="left:162px;top:2px;width:39px;height:34px;background:#fff;border-radius:2px"></div>
<div class="t" style="left:162px;top:24px;width:39px;text-align:center;font-size:9.5px;line-height:11px">2</div>
<div class="a" style="left:2px;top:37px;width:39px;height:34px;background:#fff;border-radius:2px"></div>
<div class="t" style="left:2px;top:59px;width:39px;text-align:center;font-size:9.5px;line-height:11px">2.3</div>
<div class="a" style="left:42px;top:37px;width:39px;height:34px;background:#fff;border-radius:2px"></div>
<div class="t" style="left:42px;top:59px;width:39px;text-align:center;font-size:9.5px;line-height:11px">2.6</div>
<div class="a" style="left:82px;top:37px;width:39px;height:34px;background:#fff;border-radius:2px"></div>
<div class="t" style="left:82px;top:59px;width:39px;text-align:center;font-size:9.5px;line-height:11px">3</div>
<div class="a" style="left:122px;top:37px;width:39px;height:34px;background:#fff;border-radius:2px"></div>
<div class="t" style="left:122px;top:59px;width:39px;text-align:center;font-size:9.5px;line-height:11px">3.5</div>
<div class="a" style="left:162px;top:37px;width:39px;height:34px;background:#fff;border-radius:2px"></div>
<div class="t" style="left:162px;top:59px;width:39px;text-align:center;font-size:9.5px;line-height:11px">4</div>
<div class="a" style="left:2px;top:72px;width:39px;height:34px;background:#fff;border-radius:2px"></div>
<div class="a" style="left:19.00px;top:82.00px;width:5.00px;height:5.00px;border-radius:50%;background:#000"></div>
<div class="t" style="left:2px;top:94px;width:39px;text-align:center;font-size:9.5px;line-height:11px">5</div>
<div class="a" style="left:42px;top:72px;width:39px;height:34px;background:#fff;border-radius:2px"></div>
<div class="a" style="left:58.50px;top:81.50px;width:6.00px;height:6.00px;border-radius:50%;background:#000"></div>
<div class="t" style="left:42px;top:94px;width:39px;text-align:center;font-size:9.5px;line-height:11px">6</div>
<div class="a" style="left:82px;top:72px;width:39px;height:34px;background:#fff;border-radius:2px"></div>
<div class="a" style="left:98.00px;top:81.00px;width:7.00px;height:7.00px;border-radius:50%;background:#000"></div>
<div class="t" style="left:82px;top:94px;width:39px;text-align:center;font-size:9.5px;line-height:11px">7</div>
<div class="a" style="left:122px;top:72px;width:39px;height:34px;background:#fff;border-radius:2px"></div>
<div class="a" style="left:137.50px;top:80.50px;width:8.00px;height:8.00px;border-radius:50%;background:#000"></div>
<div class="t" style="left:122px;top:94px;width:39px;text-align:center;font-size:9.5px;line-height:11px">8</div>
<div class="a" style="left:162px;top:72px;width:39px;height:34px;background:#fff;border-radius:2px"></div>
<div class="a" style="left:177.00px;top:80.00px;width:9.00px;height:9.00px;border-radius:50%;background:#000"></div>
<div class="t" style="left:162px;top:94px;width:39px;text-align:center;font-size:9.5px;line-height:11px">9</div>
<div class="a" style="left:2px;top:107px;width:39px;height:34px;background:#fff;border-radius:2px"></div>
<div class="a" style="left:16.75px;top:114.75px;width:9.50px;height:9.50px;border-radius:50%;background:#000"></div>
<div class="t" style="left:2px;top:129px;width:39px;text-align:center;font-size:9.5px;line-height:11px">10</div>
<div class="a" style="left:42px;top:107px;width:39px;height:34px;background:#fff;border-radius:2px"></div>
<div class="a" style="left:55.85px;top:113.85px;width:11.30px;height:11.30px;border-radius:50%;background:#000"></div>
<div class="t" style="left:42px;top:129px;width:39px;text-align:center;font-size:9.5px;line-height:11px">12</div>
<div class="a" style="left:82px;top:107px;width:39px;height:34px;background:#fff;border-radius:2px"></div>
<div class="a" style="left:94.95px;top:112.95px;width:13.10px;height:13.10px;border-radius:50%;background:#000"></div>
<div class="t" style="left:82px;top:129px;width:39px;text-align:center;font-size:9.5px;line-height:11px">14</div>
<div class="a" style="left:122px;top:107px;width:39px;height:34px;background:#fff;border-radius:2px"></div>
<div class="a" style="left:134.05px;top:112.05px;width:14.90px;height:14.90px;border-radius:50%;background:#000"></div>
<div class="t" style="left:122px;top:129px;width:39px;text-align:center;font-size:9.5px;line-height:11px">16</div>
<div class="a" style="left:162px;top:107px;width:39px;height:34px;background:#e3e3fd;border:1px solid #8c8cf4;border-radius:3px"></div>
<div class="a" style="left:172.25px;top:110.25px;width:18.50px;height:18.50px;border-radius:50%;background:#000"></div>
<div class="t" style="left:162px;top:129px;width:39px;text-align:center;font-size:9.5px;line-height:11px">20</div>
<div class="a" style="left:21px;top:14px;width:1px;height:1px;background:#000"></div>
<div class="a" style="left:61px;top:14px;width:1px;height:1px;background:#000"></div>
<div class="a" style="left:101px;top:14px;width:1px;height:1px;background:#000"></div>
<div class="a" style="left:140px;top:13px;width:2px;height:2px;background:#000"></div>
<div class="a" style="left:180px;top:13px;width:2px;height:2px;background:#000"></div>
<div class="a" style="left:20px;top:48px;width:2px;height:2px;background:#000"></div>
<div class="a" style="left:59px;top:49px;width:3px;height:1px;background:#000"></div>
<div class="a" style="left:60px;top:48px;width:1px;height:3px;background:#000"></div>
<div class="a" style="left:100px;top:48px;width:3px;height:3px;background:#000"></div>
<div class="a" style="left:139px;top:47px;width:4px;height:4px;border-radius:1.3px;background:#000"></div>
<div class="a" style="left:179px;top:47px;width:4px;height:4px;border-radius:1.3px;background:#000">
</div>
</div>

<div class="bd" style="left:434px;top:558px;width:15px;height:15px"></div>
<svg class="a" style="left:437px;top:563px" width="9" height="5"><path d="M1 4 L8 4 L4.5 0 Z" fill="#fff"/></svg>
<div class="a" style="left:434px;top:573px;width:15px;height:112px;background:#e6e6e6"></div>
<div class="a" style="left:434px;top:574px;width:15px;height:45px;background:#989898;border:1px solid #858585;border-radius:2px"></div>
<div class="bd" style="left:434px;top:685px;width:15px;height:15px"></div>
<svg class="a" style="left:437px;top:690px" width="9" height="5"><path d="M1 0 L8 0 L4.5 4 Z" fill="#fff"/></svg>
<!-- mid panel outer scrollbar -->
<div class="a" style="left:455px;top:65px;width:13px;height:622px;background:#ededed"></div>
<div class="bl" style="left:454px;top:51px;width:15px;height:15px"></div>
<svg class="a" style="left:457px;top:56px" width="9" height="5"><path d="M1 4 L8 4 L4.5 0 Z" fill="#f4f4f4"/></svg>
<div class="bl" style="left:454px;top:687px;width:15px;height:15px"></div>
<svg class="a" style="left:457px;top:692px" width="9" height="5"><path d="M1 0 L8 0 L4.5 4 Z" fill="#f4f4f4"/></svg>





<!-- CANVAS TOOLBAR -->
<div class="bd" style="left:472px;top:51px;width:21px;height:19px"></div>
<svg class="a" style="left:474px;top:53px" width="17" height="15"><path d="M5 4 A4.5 4.5 0 1 1 8 11" fill="none" stroke="#fff" stroke-width="2.2"/><path d="M1.5 1 L1.5 7.5 L8 7.5 Z" fill="#fff"/><rect x="3" y="12.3" width="11" height="1.5" fill="#fff"/></svg>
<div class="bl" style="left:495px;top:51px;width:21px;height:19px"></div>
<svg class="a" style="left:497px;top:53px" width="17" height="15"><path d="M12 4 A4.5 4.5 0 1 0 9 11" fill="none" stroke="#ececec" stroke-width="2.2"/><path d="M15.5 1 L15.5 7.5 L9 7.5 Z" fill="#ececec"/><rect x="3" y="12.3" width="11" height="1.5" fill="#ececec"/></svg>
<div class="bl" style="left:524px;top:51px;width:21px;height:19px"></div>
<svg class="a" style="left:527px;top:54px" width="15" height="13"><rect x="1.5" y="1.5" width="12" height="10" fill="none" stroke="#ececec" stroke-dasharray="1 1"/><path d="M7.5 2 L12 6.5 L7.5 11 L3 6.5 Z" fill="#ececec"/></svg>
<div class="bl" style="left:547px;top:51px;width:21px;height:19px"></div>
<svg class="a" style="left:550px;top:54px" width="15" height="13"><ellipse cx="7.5" cy="6.5" rx="5.5" ry="5" fill="none" stroke="#ececec" stroke-dasharray="1 1"/><path d="M0.5 6.5 H14.5" stroke="#ececec"/></svg>
<div class="a" style="left:572px;top:52px;width:19px;height:17px;background:#fff;border:1px solid #c8c8c8;border-radius:2px"></div>
<svg class="a" style="left:573px;top:54px" width="17" height="13"><path d="M1.2 5.6 Q8.7 0.5 15.5 2.2" fill="none" stroke="#666" stroke-width="0.9"/><path d="M1.2 8.8 Q9 2.6 15.8 6.4 Q9 4.6 4 8.2 Z" fill="#000" stroke="#000" stroke-width="0.9"/><circle cx="8.7" cy="7.9" r="2.9" fill="#000"/><circle cx="6.9" cy="6.9" r="1" fill="#fff"/><path d="M3.5 10.6 Q9 12.4 14.5 9" fill="none" stroke="#555" stroke-width="0.9" stroke-dasharray="1 1.2"/></svg>
<div class="t" style="left:594px;top:54px">Выделение</div>
<div class="inp" style="left:666px;top:51px;width:66px;height:19px"></div>
<div class="t" style="left:671px;top:54px">475%</div>
<div class="bd" style="left:715px;top:53px;width:15px;height:15px"></div>
<svg class="a" style="left:718px;top:59px" width="9" height="5"><path d="M1 0 L8 0 L4.5 4 Z" fill="#fff"/></svg>
<div class="bd" style="left:734px;top:51px;width:19px;height:19px"></div>
<div class="a" style="left:738px;top:59px;width:11px;height:3px;background:#fff"></div>
<div class="bd" style="left:755px;top:51px;width:19px;height:19px"></div>
<div class="a" style="left:759px;top:59px;width:11px;height:3px;background:#fff"></div>
<div class="a" style="left:763px;top:55px;width:3px;height:11px;background:#fff"></div>
<div class="bd" style="left:776px;top:51px;width:19px;height:19px"></div>
<div class="a" style="left:782px;top:57px;width:7px;height:7px;background:#fff"></div>
<div class="inp" style="left:803px;top:51px;width:68px;height:19px"></div>
<div class="t" style="left:808px;top:54px">0.0°</div>
<div class="bd" style="left:854px;top:53px;width:15px;height:15px"></div>
<svg class="a" style="left:857px;top:59px" width="9" height="5"><path d="M1 0 L8 0 L4.5 4 Z" fill="#fff"/></svg>
<div class="bd" style="left:873px;top:51px;width:19px;height:19px"></div>
<svg class="a" style="left:875px;top:53px" width="15" height="15"><path d="M4 4.5 A4.5 4.5 0 1 1 3.5 10" fill="none" stroke="#fff" stroke-width="2"/><path d="M1 2.5 L6.5 2.5 L3 7.5 Z" fill="#fff"/></svg>
<div class="bd" style="left:894px;top:51px;width:19px;height:19px"></div>
<svg class="a" style="left:896px;top:53px" width="15" height="15"><path d="M11 4.5 A4.5 4.5 0 1 0 11.5 10" fill="none" stroke="#fff" stroke-width="2"/><path d="M14 2.5 L8.5 2.5 L12 7.5 Z" fill="#fff"/></svg>
<div class="bd" style="left:915px;top:51px;width:19px;height:19px"></div>
<div class="a" style="left:921px;top:57px;width:7px;height:7px;background:#fff"></div>
<div class="bw" style="left:942px;top:51px;width:23px;height:19px"></div>
<svg class="a" style="left:942px;top:51px" width="23" height="19"><path d="M4.1 6.4 L8 3 L8 9.8 Z M18.9 12.3 L15 9 L15 15.9 Z" fill="#000"/><rect x="7.4" y="5.1" width="10.4" height="2.7" fill="#000"/><rect x="5" y="11" width="10.5" height="2.7" fill="#000"/></svg>
<div class="t" style="left:973px;top:54px">Плавность</div>
<div class="inp" style="left:1036px;top:51px;width:44px;height:19px"></div>
<div class="t" style="left:1039px;top:54px">3</div>
<div class="bd" style="left:1063px;top:53px;width:15px;height:15px"></div>
<svg class="a" style="left:1066px;top:59px" width="9" height="5"><path d="M1 0 L8 0 L4.5 4 Z" fill="#fff"/></svg>
<div class="bw" style="left:1088px;top:51px;width:21px;height:19px"></div>
<svg class="a" style="left:1090px;top:53px" width="17" height="15"><path d="M3 2 L14 13" stroke="#111" stroke-width="1.2"/></svg>
<!-- CANVAS -->
<div class="a" style="left:472px;top:73px;width:891px;height:603px;border:1px solid #c4c4c4;background:#fff"></div>
<div class="a" style="left:474px;top:75px;width:871px;height:583px;background:#999999"></div>
<!--FIG-->
<svg class="a" style="left:797.35px;top:278.95px" width="123.5" height="242.25" viewBox="0 0 26 51" shape-rendering="crispEdges"><path fill="#1c1008" d="M15 0h2v1h-2zM14 1h1v1h-1zM17 1h1v1h-1zM10 2h4v1h-4zM15 2h2v1h-2zM8 3h2v1h-2zM14 3h3v1h-3zM7 4h1v1h-1zM17 4h1v1h-1zM6 5h1v1h-1zM18 5h1v1h-1zM5 6h1v1h-1zM19 6h1v1h-1zM5 7h1v1h-1zM19 7h1v1h-1zM4 8h1v1h-1zM20 8h1v1h-1zM4 9h1v1h-1zM19 9h3v1h-3zM3 10h1v1h-1zM22 10h1v1h-1zM2 11h1v1h-1zM20 11h1v1h-1zM23 11h1v1h-1zM2 12h1v1h-1zM20 12h1v1h-1zM23 12h1v1h-1zM2 13h1v1h-1zM4 13h2v1h-2zM19 13h2v1h-2zM23 13h1v1h-1zM1 14h1v1h-1zM4 14h2v1h-2zM19 14h1v1h-1zM21 14h1v1h-1zM24 14h1v1h-1zM1 15h1v1h-1zM4 15h2v1h-2zM19 15h1v1h-1zM21 15h1v1h-1zM24 15h1v1h-1zM1 16h1v1h-1zM4 16h2v1h-2zM7 16h1v1h-1zM15 16h1v1h-1zM17 16h2v1h-2zM20 16h2v1h-2zM24 16h1v1h-1zM1 17h1v1h-1zM4 17h1v1h-1zM6 17h1v1h-1zM8 17h1v1h-1zM15 17h2v1h-2zM19 17h1v1h-1zM21 17h1v1h-1zM24 17h1v1h-1zM1 18h1v1h-1zM4 18h1v1h-1zM9 18h3v1h-3zM15 18h1v1h-1zM21 18h1v1h-1zM24 18h1v1h-1zM2 19h1v1h-1zM4 19h1v1h-1zM9 19h1v1h-1zM14 19h1v1h-1zM16 19h2v1h-2zM21 19h1v1h-1zM23 19h2v1h-2zM3 20h2v1h-2zM8 20h1v1h-1zM12 20h1v1h-1zM17 20h2v1h-2zM21 20h2v1h-2zM7 21h2v1h-2zM10 21h1v1h-1zM12 21h2v1h-2zM15 21h3v1h-3zM19 21h1v1h-1zM6 22h1v1h-1zM11 22h1v1h-1zM16 22h1v1h-1zM20 22h1v1h-1zM6 23h4v1h-4zM12 23h4v1h-4zM20 23h1v1h-1zM6 24h1v1h-1zM17 24h1v1h-1zM20 24h1v1h-1zM6 25h1v1h-1zM17 25h1v1h-1zM20 25h1v1h-1zM6 26h2v1h-2zM9 26h1v1h-1zM11 26h1v1h-1zM17 26h1v1h-1zM20 26h1v1h-1zM6 27h2v1h-2zM16 27h2v1h-2zM21 27h1v1h-1zM6 28h1v1h-1zM8 28h1v1h-1zM16 28h2v1h-2zM21 28h1v1h-1zM5 29h1v1h-1zM8 29h1v1h-1zM10 29h1v1h-1zM12 29h1v1h-1zM16 29h1v1h-1zM18 29h1v1h-1zM22 29h1v1h-1zM5 30h2v1h-2zM8 30h1v1h-1zM16 30h1v1h-1zM18 30h1v1h-1zM21 30h2v1h-2zM5 31h1v1h-1zM7 31h1v1h-1zM17 31h2v1h-2zM22 31h1v1h-1zM4 32h1v1h-1zM7 32h1v1h-1zM17 32h1v1h-1zM19 32h1v1h-1zM22 32h1v1h-1zM4 33h1v1h-1zM6 33h1v1h-1zM18 33h1v1h-1zM22 33h1v1h-1zM4 34h1v1h-1zM6 34h1v1h-1zM17 34h1v1h-1zM19 34h1v1h-1zM22 34h1v1h-1zM4 35h1v1h-1zM6 35h1v1h-1zM18 35h1v1h-1zM22 35h1v1h-1zM5 36h3v1h-3zM11 36h3v1h-3zM17 36h2v1h-2zM21 36h1v1h-1zM6 37h2v1h-2zM11 37h1v1h-1zM13 37h1v1h-1zM17 37h1v1h-1zM19 37h2v1h-2zM7 38h1v1h-1zM11 38h1v1h-1zM13 38h1v1h-1zM17 38h1v1h-1zM7 39h1v1h-1zM11 39h1v1h-1zM13 39h1v1h-1zM17 39h1v1h-1zM7 40h1v1h-1zM11 40h1v1h-1zM13 40h1v1h-1zM17 40h1v1h-1zM8 41h1v1h-1zM11 41h1v1h-1zM14 41h1v1h-1zM17 41h1v1h-1zM8 42h1v1h-1zM11 42h1v1h-1zM14 42h1v1h-1zM17 42h1v1h-1zM8 43h1v1h-1zM12 43h1v1h-1zM14 43h1v1h-1zM18 43h1v1h-1zM9 44h1v1h-1zM12 44h1v1h-1zM15 44h1v1h-1zM18 44h1v1h-1zM9 45h1v1h-1zM12 45h1v1h-1zM15 45h1v1h-1zM18 45h1v1h-1zM9 46h1v1h-1zM12 46h1v1h-1zM15 46h1v1h-1zM18 46h1v1h-1zM9 47h2v1h-2zM12 47h1v1h-1zM15 47h2v1h-2zM18 47h1v1h-1zM9 48h1v1h-1zM12 48h1v1h-1zM15 48h1v1h-1zM18 48h1v1h-1zM8 49h1v1h-1zM12 49h1v1h-1zM14 49h1v1h-1zM18 49h1v1h-1zM7 50h1v1h-1zM12 50h2v1h-2zM18 50h1v1h-1z"/><path fill="#9c8b6a" d="M15 1h2v1h-2zM14 2h1v1h-1zM10 3h4v1h-4zM8 4h6v1h-6zM15 4h2v1h-2zM7 5h6v1h-6zM14 5h4v1h-4zM6 6h5v1h-5zM13 6h5v1h-5zM6 7h2v1h-2zM14 7h1v1h-1zM16 7h1v1h-1zM5 8h2v1h-2zM15 8h1v1h-1zM5 9h1v1h-1zM7 9h2v1h-2zM13 9h1v1h-1zM16 9h1v1h-1zM5 10h1v1h-1zM16 10h1v1h-1zM3 11h1v1h-1zM5 11h1v1h-1zM16 11h1v1h-1zM3 12h1v1h-1zM5 12h1v1h-1zM16 12h1v1h-1zM3 13h1v1h-1zM6 13h1v1h-1zM16 13h1v1h-1zM2 14h1v1h-1zM6 14h1v1h-1zM16 14h1v1h-1zM2 15h1v1h-1zM6 15h1v1h-1zM16 15h1v1h-1zM2 16h1v1h-1zM6 16h1v1h-1zM16 16h1v1h-1zM2 17h1v1h-1zM2 18h1v1h-1z"/><path fill="#555649" d="M14 4h1v1h-1zM13 5h1v1h-1zM11 6h2v1h-2zM18 6h1v1h-1zM8 7h1v1h-1zM15 7h1v1h-1zM17 7h2v1h-2zM7 8h1v1h-1zM16 8h4v1h-4zM6 9h1v1h-1zM9 9h1v1h-1zM14 9h2v1h-2zM17 9h2v1h-2zM6 10h1v1h-1zM17 10h3v1h-3zM4 11h1v1h-1zM6 11h1v1h-1zM17 11h1v1h-1zM19 11h1v1h-1zM21 11h2v1h-2zM4 12h1v1h-1zM6 12h1v1h-1zM17 12h1v1h-1zM19 12h1v1h-1zM21 12h2v1h-2zM17 13h2v1h-2zM21 13h2v1h-2zM3 14h1v1h-1zM17 14h2v1h-2zM22 14h2v1h-2zM3 15h1v1h-1zM17 15h2v1h-2zM22 15h2v1h-2zM3 16h1v1h-1zM19 16h1v1h-1zM22 16h2v1h-2zM3 17h1v1h-1zM22 17h2v1h-2zM3 18h1v1h-1zM22 18h2v1h-2zM3 19h1v1h-1zM22 19h1v1h-1z"/><path fill="#e6dada" d="M9 7h5v1h-5zM9 8h6v1h-6zM10 9h3v1h-3zM10 10h3v1h-3zM8 11h1v1h-1zM10 11h3v1h-3zM14 11h1v1h-1zM18 11h1v1h-1zM9 12h1v1h-1zM11 12h2v1h-2zM11 13h2v1h-2zM7 14h2v1h-2zM10 14h5v1h-5zM8 15h7v1h-7zM8 16h2v1h-2zM12 16h2v1h-2zM10 17h3v1h-3zM11 19h1v1h-1z"/><path fill="#c6c6c6" d="M8 8h1v1h-1zM4 10h1v1h-1zM7 10h3v1h-3zM13 10h3v1h-3zM21 10h1v1h-1zM10 12h1v1h-1zM15 12h1v1h-1zM18 12h1v1h-1zM10 13h1v1h-1zM9 14h1v1h-1zM15 14h1v1h-1zM20 14h1v1h-1zM7 15h1v1h-1zM15 15h1v1h-1zM20 15h1v1h-1zM14 16h1v1h-1zM9 17h1v1h-1zM13 17h2v1h-2zM12 18h3v1h-3zM12 19h2v1h-2z"/><path fill="#acacac" d="M20 10h1v1h-1zM17 17h2v1h-2zM20 17h1v1h-1zM16 18h5v1h-5zM15 19h1v1h-1zM18 19h3v1h-3zM19 20h2v1h-2zM18 21h1v1h-1zM6 29h1v1h-1zM17 29h1v1h-1zM17 30h1v1h-1zM6 32h1v1h-1zM18 32h1v1h-1zM21 32h1v1h-1zM21 34h1v1h-1zM19 35h3v1h-3zM19 36h2v1h-2z"/><path fill="#0c1220" d="M7 11h1v1h-1zM9 11h1v1h-1zM13 11h1v1h-1zM15 11h1v1h-1z"/><path fill="#90aad0" d="M7 12h1v1h-1zM13 12h1v1h-1z"/><path fill="#5a7070" d="M8 12h1v1h-1zM14 12h1v1h-1z"/><path fill="#2e2e2e" d="M7 13h1v1h-1zM13 13h1v1h-1z"/><path fill="#6078a8" d="M8 13h1v1h-1zM14 13h1v1h-1z"/><path fill="#f8f8f8" d="M9 13h1v1h-1zM15 13h1v1h-1z"/><path fill="#8c8c8c" d="M10 16h2v1h-2zM9 20h2v1h-2zM13 20h3v1h-3zM7 22h3v1h-3zM12 22h4v1h-4zM18 22h1v1h-1zM11 23h1v1h-1zM16 23h1v1h-1zM7 24h3v1h-3zM11 24h4v1h-4zM8 25h2v1h-2zM11 25h3v1h-3zM16 26h1v1h-1zM19 26h1v1h-1zM18 27h2v1h-2zM10 28h1v1h-1zM12 28h1v1h-1zM18 28h2v1h-2zM9 29h1v1h-1zM13 29h1v1h-1zM19 29h2v1h-2zM9 30h2v1h-2zM12 30h2v1h-2zM6 31h1v1h-1zM8 31h3v1h-3zM12 31h2v1h-2zM19 31h2v1h-2zM8 32h3v1h-3zM12 32h4v1h-4zM7 33h3v1h-3zM11 33h5v1h-5zM7 34h3v1h-3zM11 34h5v1h-5zM7 35h1v1h-1zM11 35h3v1h-3z"/><path fill="#6a6a6a" d="M10 19h1v1h-1zM11 20h1v1h-1zM16 20h1v1h-1zM9 21h1v1h-1zM11 21h1v1h-1zM14 21h1v1h-1zM10 22h1v1h-1zM17 22h1v1h-1zM19 22h1v1h-1zM10 23h1v1h-1zM17 23h3v1h-3zM10 24h1v1h-1zM15 24h2v1h-2zM18 24h2v1h-2zM7 25h1v1h-1zM10 25h1v1h-1zM14 25h3v1h-3zM18 25h2v1h-2zM8 26h1v1h-1zM10 26h1v1h-1zM12 26h4v1h-4zM18 26h1v1h-1zM8 27h8v1h-8zM20 27h1v1h-1zM7 28h1v1h-1zM9 28h1v1h-1zM11 28h1v1h-1zM13 28h3v1h-3zM20 28h1v1h-1zM7 29h1v1h-1zM11 29h1v1h-1zM14 29h2v1h-2zM21 29h1v1h-1zM7 30h1v1h-1zM11 30h1v1h-1zM14 30h2v1h-2zM19 30h2v1h-2zM11 31h1v1h-1zM14 31h3v1h-3zM21 31h1v1h-1zM11 32h1v1h-1zM16 32h1v1h-1zM10 33h1v1h-1zM16 33h2v1h-2zM10 34h1v1h-1zM16 34h1v1h-1zM17 35h1v1h-1z"/><path fill="#e8dccc" d="M5 32h1v1h-1zM20 32h1v1h-1zM5 33h1v1h-1zM19 33h3v1h-3zM5 34h1v1h-1zM18 34h1v1h-1zM20 34h1v1h-1zM5 35h1v1h-1z"/><path fill="#4b5967" d="M8 35h3v1h-3zM14 35h3v1h-3zM10 36h1v1h-1zM16 36h1v1h-1zM10 37h1v1h-1zM16 37h1v1h-1zM10 38h1v1h-1zM16 38h1v1h-1zM10 39h1v1h-1zM16 39h1v1h-1zM8 40h1v1h-1zM10 40h1v1h-1zM14 40h1v1h-1zM16 40h1v1h-1zM10 41h1v1h-1zM16 41h1v1h-1zM9 42h2v1h-2zM15 42h2v1h-2zM9 43h2v1h-2zM15 43h2v1h-2zM10 44h2v1h-2zM16 44h2v1h-2z"/><path fill="#6a798e" d="M8 36h2v1h-2zM14 36h2v1h-2zM8 37h2v1h-2zM14 37h2v1h-2zM8 38h2v1h-2zM14 38h2v1h-2zM8 39h2v1h-2zM14 39h2v1h-2zM9 40h1v1h-1zM15 40h1v1h-1zM9 41h1v1h-1zM15 41h1v1h-1zM11 43h1v1h-1zM17 43h1v1h-1z"/><path fill="#a4a4a4" d="M12 37h1v1h-1zM18 37h1v1h-1zM12 38h1v1h-1zM18 38h1v1h-1zM12 39h1v1h-1zM18 39h1v1h-1zM12 40h1v1h-1zM18 40h1v1h-1zM12 41h2v1h-2zM18 41h1v1h-1zM12 42h2v1h-2zM18 42h1v1h-1zM13 43h1v1h-1zM13 44h2v1h-2zM13 45h2v1h-2zM13 46h2v1h-2zM13 47h2v1h-2zM13 48h2v1h-2zM13 49h1v1h-1z"/><path fill="#2a2a2a" d="M10 45h2v1h-2zM16 45h2v1h-2zM10 46h2v1h-2zM16 46h2v1h-2zM11 47h1v1h-1zM17 47h1v1h-1zM11 48h1v1h-1zM17 48h1v1h-1zM9 49h3v1h-3zM15 49h3v1h-3zM10 50h2v1h-2zM16 50h2v1h-2z"/><path fill="#5a5a5a" d="M10 48h1v1h-1zM16 48h1v1h-1zM8 50h2v1h-2zM14 50h2v1h-2z"/></svg>
<div class="a" style="left:474px;top:521px;width:104px;height:5px;background:#1c1008"></div>
<div class="a" style="left:583px;top:521px;width:5px;height:5px;background:#1c1008"></div>
<div class="a" style="left:617px;top:521px;width:4px;height:5px;background:#1c1008"></div>
<div class="a" style="left:626px;top:521px;width:556px;height:5px;background:#1c1008"></div>
<div class="a" style="left:1187px;top:521px;width:5px;height:5px;background:#1c1008"></div>
<div class="a" style="left:1278px;top:521px;width:4px;height:5px;background:#1c1008"></div>
<div class="a" style="left:1287px;top:521px;width:58px;height:5px;background:#1c1008"></div>
<!--/FIG-->

<div class="a" style="left:1346px;top:75px;width:15px;height:583px;background:#e6e6e6"></div>
<div class="bd" style="left:1346px;top:75px;width:15px;height:15px"></div>
<svg class="a" style="left:1349px;top:80px" width="9" height="5"><path d="M1 4 L8 4 L4.5 0 Z" fill="#fff"/></svg>
<div class="a" style="left:1346px;top:179px;width:15px;height:76px;background:#989898;border:1px solid #777;border-radius:2px"></div>
<div class="bd" style="left:1346px;top:643px;width:15px;height:15px"></div>
<svg class="a" style="left:1349px;top:648px" width="9" height="5"><path d="M1 0 L8 0 L4.5 4 Z" fill="#fff"/></svg>
<div class="a" style="left:474px;top:659px;width:887px;height:15px;background:#e6e6e6"></div>
<div class="bd" style="left:474px;top:659px;width:15px;height:15px"></div>
<svg class="a" style="left:479px;top:662px" width="5" height="9"><path d="M4 1 L4 8 L0 4.5 Z" fill="#fff"/></svg>
<div class="a" style="left:868px;top:659px;width:100px;height:15px;background:#989898;border:1px solid #777;border-radius:2px"></div>
<div class="bd" style="left:1330px;top:659px;width:15px;height:15px"></div>
<svg class="a" style="left:1336px;top:662px" width="5" height="9"><path d="M0 1 L0 8 L4 4.5 Z" fill="#fff"/></svg>
<!-- tabs -->
<div class="a" style="left:472px;top:678px;width:180px;height:24px;background:#ececec;border:1px solid #c2c2c2;border-radius:2px"></div>
<div class="a" style="left:654px;top:678px;width:180px;height:24px;background:#d6d6fc;border:1px solid #8c8cf4;border-radius:2px"></div>
<svg class="a" style="left:477px;top:682px" width="15" height="16"><path d="M0.5 0.5 H11 L14.5 4 V15.5 H0.5 Z" fill="#fff" stroke="#444"/><defs><linearGradient id="ti1" x1="0" y1="0" x2="1" y2="1"><stop offset="0" stop-color="#2a70c0"/><stop offset="0.5" stop-color="#d8e890"/><stop offset="1" stop-color="#2a8a40"/></linearGradient></defs><rect x="2" y="3" width="11" height="11" fill="url(#ti1)"/><path d="M2 14 L2 9 Q8 8 13 12 L13 14 Z" fill="#5a8a30"/></svg>
<svg class="a" style="left:659px;top:682px" width="15" height="16"><path d="M0.5 0.5 H11 L14.5 4 V15.5 H0.5 Z" fill="#fff" stroke="#444"/><defs><linearGradient id="ti2" x1="0" y1="0" x2="1" y2="1"><stop offset="0" stop-color="#2a70c0"/><stop offset="0.5" stop-color="#d8e890"/><stop offset="1" stop-color="#2a8a40"/></linearGradient></defs><rect x="2" y="3" width="11" height="11" fill="url(#ti2)"/><path d="M2 14 L2 9 Q8 8 13 12 L13 14 Z" fill="#5a8a30"/></svg>
<div class="t" style="left:496px;top:683px;font-size:12.5px">80s0.png</div>
<div class="t" style="left:600px;top:684px;width:47px;text-align:right;font-size:10.5px">400%</div>
<div class="t" style="left:678px;top:683px;font-size:12.5px">80s.png</div>
<div class="t" style="left:782px;top:684px;width:47px;text-align:right;font-size:10.5px">475%</div>
<div class="bl" style="left:1348px;top:679px;width:15px;height:10px"></div>
<svg class="a" style="left:1351px;top:682px" width="9" height="5"><path d="M1 4 L8 4 L4.5 0 Z" fill="#f4f4f4"/></svg>
<div class="bl" style="left:1348px;top:691px;width:15px;height:10px"></div>
<svg class="a" style="left:1351px;top:694px" width="9" height="5"><path d="M1 0 L8 0 L4.5 4 Z" fill="#f4f4f4"/></svg>
<!-- status -->
<div class="t" style="left:1006px;top:709px">Память:</div>
<div class="a" style="left:1055px;top:705px;width:124px;height:19px;background:#f2f2f2;border:1px solid #bdbdbd"></div>
<div class="a" style="left:1057px;top:707px;width:14px;height:15px;background:#3ed28a"></div>
<div class="t" style="left:1058px;top:709px">12% (13%)</div>
<div class="t" style="left:1187px;top:709px">Диск:</div>
<div class="a" style="left:1222px;top:705px;width:123px;height:19px;background:#f2f2f2;border:1px solid #bdbdbd"></div>
<div class="a" style="left:1224px;top:707px;width:117px;height:15px;background:#3ebcf8"></div>
<div class="t" style="left:1225px;top:709px">98%</div>
<!-- TASKBAR -->
<div class="a" style="left:0;top:728px;width:1366px;height:40px;background:#191d1d"></div>

<div class="a" style="left:392px;top:728px;width:640px;height:40px;background:linear-gradient(90deg,#231816 0%,#351611 6%,#3b1510 40%,#3b1510 85%,#1a1c1b 100%)"></div>
<div class="a" style="left:344px;top:728px;width:48px;height:40px;background:linear-gradient(90deg,#494a48,#534a48)"></div>
<div class="a" style="left:299px;top:766px;width:40px;height:2px;background:#e592f2"></div>
<div class="a" style="left:344px;top:766px;width:48px;height:2px;background:#e592f2"></div>
<svg class="a" style="left:15px;top:739px" width="18" height="18"><path d="M0 2.5 L7.5 1.4 V8.3 H0 Z M8.6 1.2 L17 0 V8.3 H8.6 Z M0 9.4 H7.5 V16.4 L0 15.4 Z M8.6 9.4 H17 V17.6 L8.6 16.5 Z" fill="#fff"/></svg>
<svg class="a" style="left:62px;top:739px" width="19" height="19"><circle cx="11.5" cy="6.8" r="5.3" fill="none" stroke="#fff" stroke-width="1.5"/><path d="M7.7 10.6 L1 17.3" stroke="#fff" stroke-width="1.7" stroke-linecap="round"/></svg>
<svg class="a" style="left:110px;top:735px" width="26" height="25"><ellipse cx="12.5" cy="14.5" rx="12" ry="10" fill="#e23c36"/><path d="M5 6 L9 5.5 L12.5 2.5 L16 5.5 L20 6 L16 8 L12.5 9.5 L9 8 Z" fill="#3fae4a"/><rect x="11.8" y="0" width="1.6" height="5" fill="#3fae4a"/><path d="M3.5 16 L6 19" stroke="#fff" stroke-width="1" opacity="0.8"/></svg>
<svg class="a" style="left:160px;top:737px" width="24" height="22"><path d="M3 20 H21 L20 22 H4 Z" fill="#a05a30"/><rect x="6" y="8" width="12" height="12" fill="#eee"/><rect x="3" y="11" width="4" height="9" fill="#ddd"/><rect x="17" y="11" width="4" height="9" fill="#ddd"/><path d="M2.5 11 L5 5 L7.5 11 Z M16.5 11 L19 5.5 L21.5 11 Z M8 8 L10 2 L12 8 Z M12 8 L14.5 0.5 L17 8 Z" fill="#e05030"/><path d="M10 20 V16 A2 2 0 0 1 14 16 V20 Z" fill="#222"/><path d="M0.5 20 L3 14 L6 20 Z M18 20 L21 14 L23.5 20 Z" fill="#3db84a"/><path d="M9 11 H15 M10 13 H14" stroke="#999" stroke-width="0.8"/></svg>
<svg class="a" style="left:209px;top:737px" width="25" height="23"><ellipse cx="11.5" cy="11" rx="10.5" ry="6.5" fill="#999" transform="rotate(-18 11.5 11)"/><ellipse cx="12" cy="8.5" rx="10.5" ry="6.5" fill="#f2f2f2" stroke="#e23a3a" stroke-width="0.9" transform="rotate(-18 12 8.5)"/><path d="M11 4 L14 14 M19 4 L13 13 M7 9 L13 8" stroke="#888" stroke-width="1"/><ellipse cx="15.5" cy="19" rx="2" ry="3.3" fill="none" stroke="#1e90e0" stroke-width="1.4" transform="rotate(20 15.5 19)"/><ellipse cx="21" cy="17.5" rx="2" ry="3.3" fill="none" stroke="#1e90e0" stroke-width="1.4" transform="rotate(-40 21 17.5)"/></svg>
<svg class="a" style="left:259px;top:739px" width="22" height="19"><path d="M0.5 2 Q0.5 0.5 2 0.5 H8 L10 2.5 H20 Q21.5 2.5 21.5 4 V17 Q21.5 18.5 20 18.5 H2 Q0.5 18.5 0.5 17 Z" fill="#f5d37a"/><rect x="0.5" y="4" width="21" height="14.5" rx="1" fill="#fbe49c"/><rect x="3" y="1.5" width="7" height="2" fill="#6fb6e6" opacity="0.6"/><path d="M4 18.5 V11 H18 V18.5 H14.5 V14.5 H7.5 V18.5 Z" fill="#3aa7e8"/></svg>
<svg class="a" style="left:306px;top:735px" width="25" height="25"><circle cx="12.5" cy="12.5" r="12" fill="#dd3a2d"/><path d="M12.5 12.5 L2.1 6.5 A12 12 0 0 0 12.5 24.5 Z" fill="#2a9a48"/><path d="M12.5 12.5 L12.5 24.5 A12 12 0 0 0 22.9 6.5 Z" fill="#f6c230"/><path d="M12.5 12.5 L2.1 6.5 A12 12 0 0 1 22.9 6.5 Z" fill="#dd3a2d"/><circle cx="12.5" cy="12.5" r="5.6" fill="#fff"/><circle cx="12.5" cy="12.5" r="4.4" fill="#3b7de8"/></svg>
<svg class="a" style="left:358px;top:736px" width="20" height="24"><defs><linearGradient id="sg" x1="0" y1="0" x2="1" y2="0.3"><stop offset="0" stop-color="#1010e0"/><stop offset="0.2" stop-color="#10c0f0"/><stop offset="0.4" stop-color="#20d040"/><stop offset="0.6" stop-color="#e8e020"/><stop offset="0.8" stop-color="#f07010"/><stop offset="1" stop-color="#e01020"/></linearGradient></defs><path d="M17 4 C15 0.5 5 0.5 5 5.5 C5 10 16 9 16 15.5 C16 22 6 23 3 18.5" fill="none" stroke="url(#sg)" stroke-width="3.4" stroke-linecap="round"/></svg>
<svg class="a" style="left:1155px;top:740px" width="17" height="16"><circle cx="5" cy="8.5" r="2.6" fill="none" stroke="#fff" stroke-width="1.1"/><path d="M0.8 15.5 Q1 11.5 5 11.2 Q9 11.5 9.2 15.5" fill="none" stroke="#fff" stroke-width="1.1"/><circle cx="11.5" cy="3.6" r="2.6" fill="none" stroke="#fff" stroke-width="1.1"/><path d="M8.5 8.5 Q9 6.5 11.5 6.3 Q15.5 6.5 15.7 10.5" fill="none" stroke="#fff" stroke-width="1.1"/></svg>
<svg class="a" style="left:1192px;top:743px" width="14" height="9"><path d="M1 8 L7 1.8 L13 8" fill="none" stroke="#fff" stroke-width="1.3"/></svg>
<div class="t" style="left:1218px;top:741px;color:#fff;font-size:12.5px;transform:scaleX(0.9);transform-origin:left">РУС</div>
<div class="t" style="left:1259px;top:731px;color:#fff;font-size:12.5px;transform:scaleX(0.86);transform-origin:left">21:30:40</div>
<div class="t" style="left:1254px;top:749px;color:#fff;font-size:12.5px;transform:scaleX(0.86);transform-origin:left">16.07.2024</div>
<svg class="a" style="left:1324px;top:739px" width="27" height="27"><path d="M1.5 1.5 H18.5 V13.5 H9 L5.5 17 V13.5 H1.5 Z" fill="#fff"/><path d="M4 4.5 H16 M4 7.5 H16 M4 10.5 H13" stroke="#191d1d" stroke-width="1.2"/><circle cx="16.5" cy="16" r="8" fill="#333" stroke="#555" stroke-width="1"/><text x="16.5" y="20" text-anchor="middle" fill="#fff" font-family="Liberation Sans" font-weight="bold" font-size="11">4</text></svg>
<div class="a" style="left:1361px;top:728px;width:1px;height:40px;background:#6a6a6a"></div>
</body></html>
